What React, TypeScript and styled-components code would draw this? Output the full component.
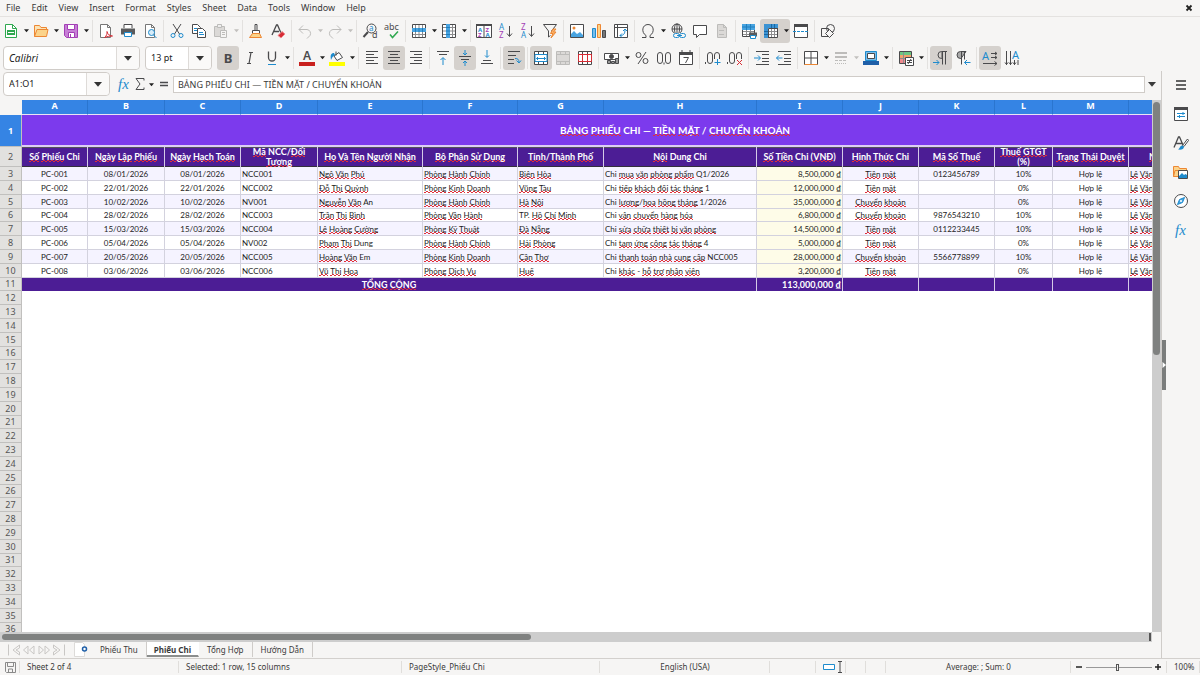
import React from "react";
import styled, { createGlobalStyle, css } from "styled-components";

const GlobalStyle = createGlobalStyle`
  * { box-sizing: border-box; }
  html, body, #root { height: 100%; }
  body {
    margin: 0;
    overflow: hidden;
    background: #f6f5f4;
    color: #3a3a3a;
    font-family: "Noto Sans", "Open Sans", sans-serif;
    font-size: 9px;
    line-height: 12px;
  }
  button, input, select { font: inherit; color: inherit; margin: 0; padding: 0; border: 0; background: none; }
  svg { display: block; flex: none; overflow: visible; }
`;

const INK = "#4a4a4c";
const BLUE = "#1e8bcd";
const ORANGE = "#ed8733";
const PURPLE = "#a33eb5";
const GREEN = "#2fa84f";
const RED = "#d62c35";
const PALE = "#bdbcba";

/* ---------- frame ---------- */

const Window = styled.div`
  display: flex;
  flex-direction: column;
  height: 100vh;
  min-height: 400px;
`;

const MenuBar = styled.nav`
  display: flex;
  align-items: center;
  height: 17px;
  padding: 0 6px 0 0;
  border-bottom: 1px solid #e4e2e0;
`;

const MenuItem = styled.button`
  padding: 0 5px 0 6px;
  height: 16px;
`;

const CloseDocument = styled.button`
  margin-left: auto;
  width: 10px;
  height: 16px;
  display: grid;
  place-items: center;
`;

const ToolRow = styled.div<{ $inset?: number; $height: number }>`
  display: flex;
  align-items: center;
  flex: none;
  height: ${(p) => p.$height}px;
  padding-left: ${(p) => p.$inset ?? 0}px;
`;

const Separator = styled.span`
  flex: none;
  width: 1px;
  height: 22px;
  margin: 0 2px;
  background: #e3e1df;
`;

const ToolButton = styled.button<{ $active?: boolean }>`
  flex: none;
  display: grid;
  place-items: center;
  width: 22px;
  height: 24px;
  border-radius: 3px;
  background: ${(p) => (p.$active ? "#d5d1cd" : "transparent")};
`;

const SplitTool = styled.span<{ $active?: boolean }>`
  display: flex;
  flex: none;
  border-radius: 3px;
  background: ${(p) => (p.$active ? "#d5d1cd" : "transparent")};
`;

const DropButton = styled.button<{ $faded?: boolean }>`
  display: grid;
  place-items: center;
  width: 8px;
  height: 24px;
  color: ${(p) => (p.$faded ? "#c2c0be" : "#222")};
`;

const Combo = styled.label<{ $width: number }>`
  position: relative;
  display: flex;
  flex: none;
  width: ${(p) => p.$width}px;
  height: 24px;
  margin-right: 5px;
  border: 1px solid #d0ccc8;
  border-radius: 4px;
  background: #fff;
`;

const ComboSelect = styled.select<{ $italic?: boolean }>`
  appearance: none;
  width: 100%;
  padding: 0 28px 0 5px;
  font-size: ${(p) => (p.$italic ? 10 : 9)}px;
  color: #222;
  font-style: ${(p) => (p.$italic ? "italic" : "normal")};
`;

const ComboInput = styled.input`
  flex: 1;
  min-width: 0;
  padding: 0 5px;
  color: #222;
`;

const ComboArrow = styled.span`
  position: absolute;
  top: 0;
  right: 0;
  bottom: 0;
  width: 23px;
  display: grid;
  place-items: center;
  color: #333;
  border-left: 1px solid #dedbd8;
  background: #faf9f8;
  border-radius: 0 4px 4px 0;
  pointer-events: none;
`;

const Workspace = styled.div`
  flex: 1;
  min-height: 0;
  display: flex;
`;

const Document = styled.main`
  flex: 1;
  min-width: 0;
  display: flex;
  flex-direction: column;
`;

const FormulaBar = styled.div`
  display: flex;
  align-items: center;
  flex: none;
  height: 29px;
  padding: 0 3px 3px;
`;

const FormulaInput = styled.input`
  flex: 1;
  min-width: 0;
  height: 17px;
  padding: 0 4px;
  border: 1px solid #d0ccc8;
  background: #fff;
`;

const FormulaTool = styled.button<{ $width: number }>`
  flex: none;
  display: grid;
  place-items: center;
  width: ${(p) => p.$width}px;
  height: 22px;
`;

const SheetRow = styled.div`
  flex: 1;
  min-height: 0;
  display: flex;
`;

const SheetView = styled.div`
  flex: 1;
  min-width: 0;
  overflow: hidden;
  background: linear-gradient(90deg, #e2e1df 22px, #fff 22px);
`;

const VerticalTrack = styled.div`
  flex: none;
  width: 9px;
  padding: 2px 1px;
  background: #cdcdcd;
`;

const VerticalThumb = styled.div`
  height: 48%;
  border-radius: 4px;
  background: #7f8180;
`;

const HorizontalTrack = styled.div`
  flex: none;
  display: flex;
  align-items: center;
  justify-content: space-between;
  height: 10px;
  margin-right: 9px;
  padding: 0 1px 0 2px;
  background: #cdcdcd;
`;

const HorizontalThumb = styled.div`
  width: 46%;
  height: 6px;
  border-radius: 4px;
  background: #7f8180;
`;

const SplitGrip = styled.span`
  width: 2px;
  height: 8px;
  background: #555;
`;

/* ---------- spreadsheet ---------- */

const Grid = styled.table`
  table-layout: fixed;
  width: 1328px;
  border-collapse: separate;
  border-spacing: 0;
  font-family: Lato, "Noto Sans", sans-serif;
  color: #1c1c1c;
  line-height: 12px;
  white-space: nowrap;

  th, td { padding: 0; overflow: hidden; }
`;

const ColumnHead = styled.th`
  height: 15px;
  border-right: 1px solid #2a75cf;
  border-bottom: 1px solid #e9e4f5;
  background: #3584e4;
  color: #fff;
  font: bold 9px/12px "Noto Sans", sans-serif;
  vertical-align: top;
`;

const Corner = styled.td`
  background: #f6f5f4;
`;

const RowHead = styled.th<{ $selected?: boolean }>`
  border: solid #c1c0be;
  border-width: 0 1px 1px 0;
  background: #e2e1df;
  color: #555;
  font: 9px/12px "Noto Sans", sans-serif;
  ${(p) =>
    p.$selected &&
    css`
      background: #3584e4;
      color: #fff;
      font-weight: bold;
    `}
`;

const TitleRow = styled.tr`
  height: 32px;
`;

const TitleCell = styled.td`
  background: #7c3aed;
  color: #fff;
  border-bottom: 2px solid #dccdf5;
  text-align: center;
  font-size: 10px;
  font-weight: bold;
`;

const HeadingRow = styled.tr`
  height: 20px;
`;

const Heading = styled.th`
  border: solid #d5cbe6;
  border-width: 0 1px 0 0;
  box-shadow: inset 0 1px 0 #55525c, inset 0 -1px 0 #33303c;
  background: #4c1d95;
  color: #fff;
  font-size: 9px;
  line-height: 10px;
`;

const HeadingText = styled.div`
  display: flex;
  flex-direction: column;
  justify-content: center;
  height: 19px;
`;

const BodyRow = styled.tr<{ $short?: boolean; $tint?: boolean }>`
  height: ${(p) => (p.$short ? 13 : 14)}px;
  background: ${(p) => (p.$tint ? "#f5f3ff" : "#fff")};
`;

const Cell = styled.td<{ $align?: string; $money?: boolean }>`
  && { padding: 0 1px; }
  border: solid #d3d2de;
  border-width: 0 1px 1px 0;
  font-size: 8px;
  text-align: ${(p) => p.$align ?? "left"};
  background: ${(p) => (p.$money ? "#fefce8" : "transparent")};
`;

const TotalCell = styled.td<{ $align?: string }>`
  && { padding: 0 1px; }
  border-right: 1px solid #d5cbe6;
  background: #4c1d95;
  color: #fff;
  font-size: 9px;
  font-weight: bold;
  text-align: ${(p) => p.$align ?? "center"};
`;

const BlankCell = styled.td`
  background: #fff;
`;

const Misspelt = styled.span`
  background:
    linear-gradient(90deg, #e0303a 50%, transparent 50%) 0 100% / 4px 1px repeat-x,
    linear-gradient(90deg, transparent 50%, #e0303a 50%) 0 calc(100% - 1px) / 4px 1px repeat-x;
`;

/* ---------- tabs, sidebar, status ---------- */

const TabStrip = styled.div`
  display: flex;
  flex: none;
  height: 16px;
  padding-left: 6px;
  font-size: 8px;
`;

const TabNav = styled.button`
  width: 15px;
  height: 15px;
  display: grid;
  place-items: center;
  color: #c9c7c5;
`;

const AddSheet = styled.button`
  display: grid;
  place-items: center;
  width: 14px;
  height: 15px;
  margin: 0 4px 0 8px;
`;

const SheetTab = styled.button<{ $active?: boolean }>`
  height: 15px;
  padding: 0 8px;
  border-right: 1px solid #cfccc9;
  ${(p) =>
    p.$active &&
    css`
      padding: 2px 7px 0;
      background: #fff;
      border-right-color: transparent;
      border-bottom: 2px solid #8b8d8c;
      font-weight: bold;
    `}
`;

const Sidebar = styled.aside`
  position: relative;
  flex: none;
  display: flex;
  flex-direction: column;
  align-items: center;
  gap: 5px;
  width: 39px;
  padding-top: 2px;
  border-left: 1px solid #cfccc9;
`;

const DeckButton = styled.button`
  display: grid;
  place-items: center;
  width: 24px;
  height: 24px;
`;

const DeckHandle = styled.button`
  position: absolute;
  left: 0;
  top: 50%;
  width: 4px;
  height: 50px;
  margin-top: -25px;
  && { background: #7b7d7c; }
  display: grid;
  place-items: center;
`;

const StatusBar = styled.footer`
  flex: none;
  display: grid;
  grid-template-columns: 20px 159fr 223fr 198fr 170fr 46px 30px 20px 20px 185fr 96px 33px;
  align-items: center;
  height: 17px;
  border-top: 1px solid #d3d0cd;
  font-size: 8px;
`;

const StatusField = styled.div<{ $center?: boolean }>`
  display: flex;
  align-items: center;
  justify-content: ${(p) => (p.$center ? "center" : "flex-start")};
  height: 12px;
  padding: 0 6px 0 7px;
  border-right: 1px solid #e0dedb;
  white-space: nowrap;
`;

const ZoomField = styled.div`
  display: flex;
  align-items: center;
  justify-content: center;
  gap: 2px;
  height: 12px;
  border-right: 1px solid #e0dedb;
`;

const ZoomStep = styled.button`
  width: 9px;
  height: 12px;
  display: grid;
  place-items: center;
`;

const ZoomSlider = styled.input`
  appearance: none;
  width: 66px;
  height: 12px;
  background: linear-gradient(#999, #999) center / 100% 1px no-repeat;
  &::-webkit-slider-thumb {
    appearance: none;
    width: 3px;
    height: 7px;
    border: 1px solid #555;
    background: #f6f5f4;
  }
`;

/* ---------- icons ---------- */

const Svg = ({ children, w = 16, h = 16 }: { children: React.ReactNode; w?: number; h?: number }) => (
  <svg width={w} height={h} viewBox={`0 0 ${w} ${h}`} fill="none" stroke={INK} strokeWidth="1" aria-hidden="true">
    {children}
  </svg>
);

const Arrow = ({ size = 5 }: { size?: number }) => (
  <svg width={size} height={size} viewBox="0 0 6 6" aria-hidden="true">
    <path d="M0 1.5h6L3 5z" fill="currentColor" />
  </svg>
);

const page = "M3.5 1.5h6l3 3v10h-9z";
const lines = (xs: [number, number][], ys: number[]) => xs.map(([a, b], i) => `M${a} ${ys[i]}.5H${b}`).join("");

const I: Record<string, React.ReactNode> = {
  newSheet: (
    <Svg><path d="M2.5 1.5h7l4 4v9h-11z" stroke={GREEN} fill="#fff" /><path d="M9.5 1.5v4h4" stroke={GREEN} /><path d="M4 7h8v5H4z" fill={GREEN} stroke="none" /><path d="M5 9.500h6" stroke="#fff" /></Svg>
  ),
  open: (
    <Svg><path d="M1.500 13.500v-11h5l1.500 2h5.500v3" fill="#fbe3b4" stroke={ORANGE} /><path d="M1.500 13.500 4 6.500h11l-1.500 7z" fill="#fbd38a" stroke={ORANGE} /></Svg>
  ),
  save: (
    <Svg><path d="M1.500 1.500h13v13h-11l-2-2z" fill="#c77fd6" stroke={PURPLE} /><path d="M4.500 1.500h7v5h-7z" fill="#fff" stroke={PURPLE} /><path d="M5.500 9.500h6v5h-6z" fill="#fff" stroke={PURPLE} /><path d="M7.500 11v3" stroke={PURPLE} /></Svg>
  ),
  pdf: (
    <Svg><path d="M2.500 1.500h7l3 3v10h-10z" fill="#fff" stroke="#777" /><path d="M9.500 1.500v3h3" stroke="#777" /><path d="M6.500 14.500c2-1.500 3-4 2.500-6 .5 3 3 4.500 5.500 4.500-3 0-5.500.5-8 1.500z" stroke={RED} /></Svg>
  ),
  print: (
    <Svg><path d="M4 5V1.500h8V5" fill="#fff" /><path d="M1 5.500h14v6H1z" fill="#5a5a5c" stroke="none" /><path d="M4.500 9.500h7v4h-7z" fill="#fff" stroke={BLUE} /></Svg>
  ),
  preview: (
    <Svg><path d={page} fill="#fff" stroke="#777" /><path d="M9.500 1.500v3h3" stroke="#777" /><circle cx="9.500" cy="9.500" r="3" fill="#d8ecf8" stroke={BLUE} /><path d="m11.500 12 3 3" stroke={BLUE} /></Svg>
  ),
  cut: (
    <Svg><path d="m4 1 6.500 10M12 1 5.500 11" /><circle cx="4" cy="12.500" r="2" stroke={BLUE} /><circle cx="12" cy="12.500" r="2" stroke={BLUE} /></Svg>
  ),
  copy: (
    <Svg><path d="M1.500 1.500h5l3 3v6h-8z" fill="#fff" /><path d="M6.500 5.500h5l3 3v6h-8z" fill="#fff" /><path d="M8 9.500h4M8 11.500h5M3 5.500h3M3 7.500h3" stroke={BLUE} /></Svg>
  ),
  paste: (
    <Svg><path d="M1.500 3.500h10v10h-10z" fill="#dbd9d7" stroke={PALE} /><path d="M4.500 1.500h4v3h-4z" fill="#eee" stroke={PALE} /><path d="M7.500 7.500h6v7h-6z" fill="#f6f5f4" stroke={PALE} /><path d="M9 9.500h3M9 11.500h3" stroke={PALE} /></Svg>
  ),
  brush: (
    <Svg><path d="M7 1.500h2v6H7z" /><path d="M4.500 7.500h7v3h-7z" fill="#fff" /><path d="M4.500 10.500h7l2 4h-12z" fill="#fbd38a" stroke={ORANGE} /></Svg>
  ),
  clear: (
    <Svg><path d="M2 12 6.500 2h1L11 10M4 8.500h5" strokeWidth="1.300" /><path d="m8 12.500 4-4 3 2.500-4 4z" fill={RED} stroke="#f08a8f" /></Svg>
  ),
  undo: (<Svg><path d="M2 6.500h8a4 4 0 0 1 3 6l-3 3M6 2.500l-4 4 4 4" stroke={PALE} /></Svg>),
  redo: (<Svg><path d="M14 6.500H6a4 4 0 0 0-3 6l3 3M10 2.500l4 4-4 4" stroke={PALE} /></Svg>),
  find: (
    <Svg><circle cx="9.500" cy="5.500" r="4.500" /><path d="M6 9 1.500 14" strokeWidth="2" /><text x="7" y="8" fontSize="8" fill={BLUE} stroke="none">a</text><text x="10" y="15" fontSize="9" fill={INK} stroke="none">d</text></Svg>
  ),
  spell: (
    <Svg><text x="0" y="7" fontSize="9" fill={INK} stroke="none">abc</text><path d="m6 11.500 2.500 3 5.500-6" stroke={GREEN} strokeWidth="1.500" /></Svg>
  ),
  rows: (
    <Svg><path d="M1.500 1.500h13v13h-13z" fill="#fff" /><path d="M4.500 2v12M8 2v12M11.500 2v12M2 11.500h12" stroke="#8c8c8e" /><path d="M1 5h14v4H1z" fill="#48a3e0" stroke="none" /><path d="M4.500 5v4M8 5v4M11.500 5v4" stroke="#1f7fbf" /></Svg>
  ),
  cols: (
    <Svg><path d="M1.500 1.500h13v13h-13z" fill="#fff" /><path d="M2 4.500h12M2 8h12M2 11.500h12M11.500 2v12" stroke="#8c8c8e" /><path d="M5 1h4v14H5z" fill="#48a3e0" stroke="none" /><path d="M5 4.500h4M5 8h4M5 11.500h4" stroke="#1f7fbf" /></Svg>
  ),
  sort: (
    <Svg><path d="M.5 1.500h15v13H.5zM8 3v11" fill="#fff" /><path d="M0 1h16v2H0z" fill={INK} stroke="none" /><g stroke="none" fontSize="6" fontWeight="bold"><text x="2" y="8.500" fill={BLUE}>A</text><text x="2" y="14" fill={PURPLE}>Z</text><text x="9.500" y="8.500" fill={PURPLE}>Z</text><text x="9.500" y="14" fill={BLUE}>A</text></g></Svg>
  ),
  sortAsc: (
    <Svg><g stroke="none" fontSize="8"><text x="1" y="7" fill={BLUE}>A</text><text x="1" y="15" fill={PURPLE}>Z</text></g><path d="M11.500 3v10M9 10.500l2.500 3 2.500-3" /></Svg>
  ),
  sortDesc: (
    <Svg><g stroke="none" fontSize="8"><text x="1" y="7" fill={PURPLE}>Z</text><text x="1" y="15" fill={BLUE}>A</text></g><path d="M11.500 3v10M9 10.500l2.500 3 2.500-3" /></Svg>
  ),
  filter: (
    <Svg><path d="M1.500 1.500h13L9.500 8v2M1.500 1.500l5 6.500v6l2-1.500" /><path d="m11 6-2.500 4.500H11L9 15l5-6h-2.500L14 6z" fill="#fbb46c" stroke={ORANGE} /></Svg>
  ),
  image: (
    <Svg><path d="M1.500 1.500h13v13h-13z" fill="#fff" /><path d="m2 14 0-3 3-3 3 3 3-2 3 3v2z" fill="#48a3e0" stroke="none" /><circle cx="5" cy="5" r="1.500" fill={ORANGE} stroke="none" /></Svg>
  ),
  chart: (
    <Svg><path d="M1.500 5.500h3v9h-3z" fill="#79bdea" stroke={BLUE} /><path d="M6.500 1.500h3v13h-3z" fill="#fbd38a" stroke={ORANGE} /><path d="M11.500 7.500h3v7h-3z" fill="#777" /></Svg>
  ),
  pivot: (
    <Svg><path d="M1.500 1.500h13v13h-13zM1.500 4.500h13M4.500 1.500v13" fill="#fff" /><path d="M7 12.500c4 0 5-2 5-6M10 8l2-2 2 2M9 10.500l-2 2 2 2" stroke={BLUE} /></Svg>
  ),
  omega: (<Svg><path d="M2 14.500h4v-2C1 9.500 2 1.500 8 1.500s7 8 2 11v2h4" /></Svg>),
  link: (
    <Svg><circle cx="7" cy="6" r="5" /><path d="M2 6h10M7 1v10" /><ellipse cx="7" cy="6" rx="2.500" ry="5" /><path d="M4 10h12v5H4z" fill="#f6f5f4" stroke="none" /><rect x="3.500" y="10.500" width="6" height="4" rx="2" stroke={BLUE} /><rect x="9.500" y="10.500" width="6" height="4" rx="2" stroke={BLUE} /><path d="M7 12.500h5" stroke={BLUE} /></Svg>
  ),
  comment: (<Svg><path d="M1.500 2.500h13v9h-7l-3 3v-3h-3z" fill="#fff" /></Svg>),
  pageBand: (<Svg><path d={page} fill="#dbd9d7" stroke={PALE} /><path d="M9.500 1.500v3h3M5 7.500h5M5 11.500h5" stroke={PALE} /></Svg>),
  printArea: (
    <Svg><path d="M1.500 1.500h12v12h-12z" fill="#fff" /><path d="M2 8.500h11M2 11.500h11M5.500 2v11M9.500 2v11" stroke="#8c8c8e" /><path d="M1 1h13v6H1z" fill="#48a3e0" stroke="none" /><path d="M1 4h13M5.500 1v6M9.500 1v6" stroke="#1f7fbf" /><path d="M8 9.500h8v4H8z" fill="#5a5a5c" stroke="none" /><path d="M9.500 12.500h5v3h-5z" fill="#fff" stroke={BLUE} /></Svg>
  ),
  freeze: (
    <Svg><path d="M1.500 1.500h13v13h-13z" fill="#fff" /><path d="M6 8.500h8M6 11.500h8M8.500 5v9M11.500 5v9" stroke="#8c8c8e" /><path d="M1 1h14v4H1zM1 1h4v14H1z" fill="#3b93d3" stroke="none" /><path d="M8.500 1v4M11.500 1v4M1 8.500h4M1 11.500h4" stroke="#1766a3" /><path d="M5.500 15V5.500H15" /></Svg>
  ),
  split: (
    <Svg><path d="M1.500 1.500h13v13h-13z" fill="#fff" /><path d="M1 1h14v3H1z" fill={INK} stroke="none" /><path d="M0 8.500h16" stroke={BLUE} strokeDasharray="3 1" /></Svg>
  ),
  shapes: (
    <Svg><path d="M1.500 5.500h7v8h-7z" /><circle cx="10.500" cy="5.500" r="4" /><path d="m9.500 6.500 4 4-4 4-4-4z" fill="#f6f5f4" /></Svg>
  ),
  bold: (<Svg><text x="8" y="13" textAnchor="middle" fontSize="13" fontWeight="bold" fill={INK} stroke="none">B</text></Svg>),
  italic: (<Svg><path d="M7 2.500h4M5 13.500h4M9 2.500l-2 11" strokeWidth="1.200" /></Svg>),
  underline: (<Svg><path d="M4.500 1.500v6a3.500 3.500 0 0 0 7 0v-6" strokeWidth="1.300" /><path d="M4 14.500h8" stroke={BLUE} /></Svg>),
  fontColor: (<Svg><text x="8" y="10" textAnchor="middle" fontSize="12" fontWeight="600" fill={INK} stroke="none">A</text><path d="M0 12h16v4H0z" fill="#c9211e" stroke="none" /></Svg>),
  highlight: (<Svg><path d="m5 6 5-3.500 3.500 5L8 10.500z" fill="#fff" /><path d="M7 1.500v4" /><path d="M5 3C2 3 1 5 2 10l1.500-3L6 5z" fill={BLUE} stroke="none" /><path d="M0 12h16v4H0z" fill="#ff0" stroke="none" /></Svg>),
  alignLeft: (<Svg><path d={lines([[2, 14], [2, 10], [2, 14], [2, 10], [2, 14]], [1, 4, 7, 10, 13])} /></Svg>),
  alignCenter: (<Svg><path d={lines([[2, 14], [4, 12], [2, 14], [4, 12], [2, 14]], [1, 4, 7, 10, 13])} /></Svg>),
  alignRight: (<Svg><path d={lines([[2, 14], [6, 14], [2, 14], [6, 14], [2, 14]], [1, 4, 7, 10, 13])} /></Svg>),
  alignTop: (<Svg><path d="M2 1.500h12M4 4.500h8" /><path d="M8 15V8M5.500 10 8 7.500l2.500 2.500" stroke={BLUE} /></Svg>),
  alignMiddle: (<Svg><path d="M2 6.500h12M4 9.500h8" /><path d="M8 0v4.500M6 3l2 2 2-2M8 16v-4.500M6 13l2-2 2 2" stroke={BLUE} /></Svg>),
  alignBottom: (<Svg><path d="M4 10.500h8M2 13.500h12" /><path d="M8 0v7M6 5.500l2 2 2-2" stroke={BLUE} /></Svg>),
  wrap: (<Svg><path d="M2 1.500h12M2 5.500h8M2 9.500h6M2 13.500h6" /><path d="M9 8.500c3 0 4 1 4 4M10.500 10.500l2.500 2.500 2-2.500" stroke={BLUE} /></Svg>),
  mergeCenter: (<Svg><path d="M1.500 1.500h13v13h-13zM1.500 4.500h13M1.500 11.500h13M5.500 1.500v3M10.500 1.500v3M5.500 11.500v3M10.500 11.500v3" fill="#fff" /><path d="M2 4.500h12v7H2z" fill="#fff" stroke={BLUE} /><path d="M3.500 8.500h9M5 7l-1.500 1.500L5 10M11 7l1.500 1.500L11 10" stroke={BLUE} /></Svg>),
  merge: (<Svg><path d="M1.500 1.500h13v13h-13zM1.500 4.500h13M1.500 11.500h13M5.500 1.500v3M10.500 1.500v3M5.500 11.500v3M10.500 11.500v3" fill="#dbd9d7" stroke={PALE} /></Svg>),
  unmerge: (<Svg><path d="M1.500 1.500h13v13h-13zM1.500 4.500h13M1.500 11.500h13M5.500 1.500v3M10.500 1.500v3M5.500 11.500v3M10.500 11.500v3" fill="#fff" /><path d="M1.500 4.500h13v7h-13zM5.500 4.500v7M10.500 4.500v7" stroke={RED} /></Svg>),
  currency: (<Svg><path d="M.5 3.500h14v6H.5z" fill="#fff" /><circle cx="7.500" cy="6.500" r="2" fill={INK} /><path d="M3.500 10.500h3v3h-3zM7.500 11.500h3v2h-3zM11.500 8.500h3v5h-3z" fill="#999" /></Svg>),
  percent: (<Svg><circle cx="4.500" cy="5" r="2.500" /><circle cx="11.500" cy="11" r="2.500" /><path d="M12 2 4 14" /></Svg>),
  number: (<Svg><rect x="1.500" y="2.500" width="5" height="11" rx="2.500" /><rect x="9.500" y="2.500" width="5" height="11" rx="2.500" /><path d="M8 12.500v2" /></Svg>),
  date: (<Svg><path d="M1.500 2.500h13v12h-13z" fill="#fff" /><path d="M1 2h14v3H1z" fill={INK} stroke="none" /><path d="M4 0v3M12 0v3M5.500 7.500h5l-3 5.500" /></Svg>),
  addDecimal: (<Svg><path d="M.5 12v2" /><rect x="2.500" y="2.500" width="5" height="11" rx="2.500" /><rect x="9.500" y="2.500" width="5" height="11" rx="2.500" /><path d="M9 9h7v7H9z" fill="#f6f5f4" stroke="none" /><path d="M12.500 9v6M9.500 12.500h6" stroke={BLUE} /></Svg>),
  removeDecimal: (<Svg><path d="M.5 12v2" /><rect x="2.500" y="2.500" width="5" height="11" rx="2.500" /><rect x="9.500" y="2.500" width="5" height="11" rx="2.500" /><path d="M9 9h7v7H9z" fill="#f6f5f4" stroke="none" /><path d="m10 10 5 5M15 10l-5 5" stroke={RED} /></Svg>),
  indent: (<Svg><path d="M2 1.500h13M8 4.500h7M8 8.500h7M8 11.500h7M2 14.500h13" /><path d="M0 8h6M4 5.500 6.500 8 4 10.500" stroke={BLUE} /></Svg>),
  outdent: (<Svg><path d="M2 1.500h13M8 4.500h7M8 8.500h7M8 11.500h7M2 14.500h13" /><path d="M6.500 8h-6M3 5.500.5 8 3 10.500" stroke={BLUE} /></Svg>),
  borders: (<Svg><path d="M1.500 1.500h13v13h-13z" fill="#fff" /><path d="M8 1.500v13M1.500 8h13" /><path d="M1.500 14.500h13" stroke={ORANGE} /></Svg>),
  borderStyle: (<Svg><path d="M2 2h12v2H2z" fill={PALE} stroke="none" /><path d="M2 7h12" stroke={PALE} strokeWidth="2" /><path d="M2 10.500h12" stroke={PALE} strokeDasharray="3 1" /><path d="M2 13.500h12" stroke={PALE} strokeDasharray="1 1" /></Svg>),
  borderColor: (<Svg><path d="M2.500 1.500h11v9h-11z" fill="#79bdea" stroke={BLUE} /><path d="M4.500 3.500h7v5h-7z" fill="#fff" /><path d="M0 11h16v4H0z" fill="#1f5fa8" stroke="none" /></Svg>),
  conditional: (<Svg><path d="M1.500 1.500h12v12h-12z" fill="#fff" /><path d="M2 2h11v3H2z" fill="#6cc784" stroke="none" /><path d="M2 5h11v3H2z" fill="#f4a06b" stroke="none" /><path d="M2 8h5v5H2z" fill="#f08a8f" stroke="none" /><path d="M5.500 2v11M2 8.500h6" stroke="#8c8c8e" /><path d="M7.500 7.500h8v8h-8z" fill="#fff" /><path d="M9 10.500h5M9 12.500h5M13 9l-3 5" /></Svg>),
  ltr: (<Svg><path d="M14 1.500H8.500a3.500 3.500 0 0 0 0 7H9V1.500M9.500 1.500v13M12.500 1.500v13" /><path d="M0 12.500h6M3.500 10 6 12.500 3.500 15" stroke={BLUE} /></Svg>),
  rtl: (<Svg><path d="M11 1.500H5.500a3.500 3.500 0 0 0 0 7H6z" fill="#aaa" /><path d="M6.500 1.500v13M9.500 1.500v8" /><path d="M15.500 12.500h-6M12 10l-2.500 2.500L12 15" stroke={BLUE} /></Svg>),
  textRight: (<Svg><text x="0" y="10" fontSize="11" fill={BLUE} stroke="none">A</text><path d="M9 3.500h6M9 7.500h6M1 13.500h14M13 2l2 1.500L13 5M13 6l2 1.500L13 9M12.500 11.500l2.500 2-2.500 2" /></Svg>),
  textDown: (<Svg><text x="8" y="9" fontSize="11" fill={BLUE} stroke="none">A</text><path d="M2.500 1v14M6.500 1v14M10.500 10v5M14 10v5M1 12.500l1.500 2 1.500-2M5 12.500l1.500 2 1.500-2M9 12.500l1.500 2 1.500-2" /></Svg>),
  fx: (<Svg><text x="2" y="13" fontSize="15" fontStyle="italic" fontFamily="Liberation Serif" fill={BLUE} stroke="none">fx</text></Svg>),
  sigma: (<Svg w={10} h={14}><path d="M9 3.500v-2H1l4 5.500-4 5.500h8v-2" /></Svg>),
  equals: (<Svg w={10} h={10}><path d="M1 3.500h8M1 6.500h8" strokeWidth="1.500" /></Svg>),
  hamburger: (<Svg w={12} h={12}><path d="M1 2h10M1 6h10M1 10h10" stroke="#333" strokeWidth="1.500" /></Svg>),
  properties: (<Svg><path d="M1.500 1.500h13v13h-13z" fill="#fff" /><path d="M1 1h14v3H1z" fill={INK} stroke="none" /><path d="M4 7.500h8M4 10.500h8M10 6v3M6.500 9v3" stroke={BLUE} /></Svg>),
  stylesDeck: (<Svg><path d="M1 12.500 5.500 2h1l3.500 8M3 8.500h6" strokeWidth="1.300" /><path d="m14.500 4-5 6.500 1.500 1 4.500-6z" fill="#fff" /><path d="M9 10.500c-2 0-2 3-4 4 3 .5 6 0 6-3z" fill={BLUE} stroke="none" /></Svg>),
  gallery: (<Svg><path d="M.5 12.500v-10h5l1 2h7v2" fill="#fbd38a" stroke={ORANGE} /><path d="M.5 12.500 2 6.500h4v6z" fill="#fbd38a" stroke={ORANGE} /><path d="M5.500 6.500h9v8h-9z" fill="#fff" /><path d="m6 14 0-2 3-3 2 2 1.500-1 1.500 1v3z" fill={BLUE} stroke="none" /></Svg>),
  navigator: (<Svg><circle cx="8" cy="8" r="6.500" fill="#fff" /><path d="m11.500 4.500-2 5-5 2 2-5z" fill="#48a3e0" stroke={BLUE} /><circle cx="8" cy="8" r="1" fill="#fff" stroke="none" /></Svg>),
  minus: (<Svg w={8} h={8}><path d="M1 4h6" stroke="#222" strokeWidth="1.500" /></Svg>),
  plus: (<Svg w={8} h={8}><path d="M1 4h6M4 1v6" stroke="#222" strokeWidth="1.500" /></Svg>),
  saved: (<Svg w={11} h={11}><path d="M.5.5h10v10h-9l-1-1zM2.500.5h6v4h-6zM3.500 7h4v3.500h-4z" stroke="#8a8a8a" /></Svg>),
  selection: (<Svg w={22} h={12}><path d="M.5 3.500h11v5H.5z" stroke={BLUE} fill="#fff" /><path d="M15 .5h4M15 11.500h4M17 .5v11" /></Svg>),
  first: (<Svg w={14} h={14}><path d="M1.500 1.500v11M12.500 2 6 7l6.500 5V9L9 7l3.500-2z" stroke="currentColor" /></Svg>),
  previous: (<Svg w={14} h={10}><path d="M6 1 1.500 5 6 9zM12 1 7.500 5 12 9z" stroke="currentColor" /></Svg>),
  next: (<Svg w={14} h={10}><path d="m2 1 4.500 4L2 9zM8 1l4.500 4L8 9z" stroke="currentColor" /></Svg>),
  last: (<Svg w={14} h={14}><path d="M12.500 1.500v11M1.500 2 8 7l-6.500 5V9L5 7 1.500 5z" stroke="currentColor" /></Svg>),
  addTab: (<Svg w={14} h={15}><path d="M.5.5h8l2 2v12H.5z" fill="#fff" stroke="#dddbd9" /><circle cx="10.500" cy="7" r="2" stroke="#1f5fa8" fill="#fff" strokeWidth="1.500" /></Svg>),
  close: (<Svg w={8} h={8}><path d="m1.500 1.500 5 5M6.500 1.500l-5 5" stroke="#222" strokeWidth="1.800" /></Svg>),
  collapse: (<Svg w={4} h={6}><path d="M.5 0v6L4 3z" fill="#fff" stroke="none" /></Svg>),
};

/* ---------- toolbars ---------- */

type Tool = { icon: string; label: string; drop?: boolean; active?: boolean; faded?: boolean };
const t = (icon: string, label: string, flags = ""): Tool => ({
  icon,
  label,
  drop: flags.includes("d"),
  active: flags.includes("a"),
  faded: flags.includes("f"),
});

const standardGroups: Tool[][] = [
  [t("newSheet", "New", "d"), t("open", "Open", "d"), t("save", "Save", "d")],
  [t("pdf", "Export as PDF"), t("print", "Print"), t("preview", "Print Preview")],
  [t("cut", "Cut"), t("copy", "Copy"), t("paste", "Paste", "df")],
  [t("brush", "Clone Formatting"), t("clear", "Clear Formatting")],
  [t("undo", "Undo", "df"), t("redo", "Redo", "df")],
  [t("find", "Find & Replace"), t("spell", "Spelling")],
  [t("rows", "Row", "d"), t("cols", "Column", "d")],
  [t("sort", "Sort"), t("sortAsc", "Sort Ascending"), t("sortDesc", "Sort Descending"), t("filter", "AutoFilter")],
  [t("image", "Insert Image"), t("chart", "Insert Chart"), t("pivot", "Insert Pivot Table")],
  [t("omega", "Special Character", "d"), t("link", "Hyperlink"), t("comment", "Comment"), t("pageBand", "Headers and Footers")],
  [t("printArea", "Define Print Area"), t("freeze", "Freeze Rows and Columns", "da"), t("split", "Split Window")],
  [t("shapes", "Show Draw Functions")],
];

const formatGroups: Tool[][] = [
  [t("bold", "Bold", "a"), t("italic", "Italic"), t("underline", "Underline", "d")],
  [t("fontColor", "Font Color", "d"), t("highlight", "Background Color", "d")],
  [t("alignLeft", "Align Left"), t("alignCenter", "Center Horizontally", "a"), t("alignRight", "Align Right")],
  [t("alignTop", "Align Top"), t("alignMiddle", "Center Vertically", "a"), t("alignBottom", "Align Bottom")],
  [t("wrap", "Wrap Text", "a")],
  [t("mergeCenter", "Merge and Center", "a"), t("merge", "Merge Cells"), t("unmerge", "Unmerge Cells")],
  [t("currency", "Currency", "d"), t("percent", "Percent"), t("number", "Number"), t("date", "Date")],
  [t("addDecimal", "Add Decimal Place"), t("removeDecimal", "Delete Decimal Place")],
  [t("indent", "Increase Indent"), t("outdent", "Decrease Indent")],
  [t("borders", "Borders", "d"), t("borderStyle", "Border Style", "df"), t("borderColor", "Border Color", "d")],
  [t("conditional", "Conditional", "d")],
  [t("ltr", "Left-To-Right", "a"), t("rtl", "Right-To-Left")],
  [t("textRight", "Text direction from left to right", "a"), t("textDown", "Text direction from top to bottom")],
];

const ToolGroups = ({ groups }: { groups: Tool[][] }) => (
  <>
    {groups.map((group, g) => (
      <React.Fragment key={g}>
        {g > 0 && <Separator />}
        {group.map((tool) =>
          tool.drop ? (
            <SplitTool key={tool.icon} $active={tool.active}>
              <ToolButton aria-label={tool.label}>{I[tool.icon]}</ToolButton>
              <DropButton $faded={tool.faded} aria-label={`${tool.label} options`}>
                <Arrow />
              </DropButton>
            </SplitTool>
          ) : (
            <ToolButton key={tool.icon} $active={tool.active} aria-label={tool.label}>
              {I[tool.icon]}
            </ToolButton>
          )
        )}
      </React.Fragment>
    ))}
  </>
);

/* ---------- sheet data ---------- */

const columns = [
  { letter: "A", width: 66, title: ["Số Phiếu Chi"] },
  { letter: "B", width: 77, title: ["Ngày Lập Phiếu"] },
  { letter: "C", width: 76, title: ["Ngày Hạch Toán"] },
  { letter: "D", width: 77, title: ["Mã NCC/Đối", "Tượng"] },
  { letter: "E", width: 105, title: ["Họ Và Tên Người Nhận"] },
  { letter: "F", width: 95, title: ["Bộ Phận Sử Dụng"] },
  { letter: "G", width: 86, title: ["Tỉnh/Thành Phố"] },
  { letter: "H", width: 153, title: ["Nội Dung Chi"] },
  { letter: "I", width: 86, title: ["Số Tiền Chi (VNĐ)"] },
  { letter: "J", width: 76, title: ["Hình Thức Chi"] },
  { letter: "K", width: 76, title: ["Mã Số Thuế"] },
  { letter: "L", width: 58, title: ["Thuế GTGT", "(%)"] },
  { letter: "M", width: 76, title: ["Trạng Thái Duyệt"] },
  { letter: "N", width: 93, title: ["Người Duyệt"] },
  { letter: "O", width: 106, title: ["Ghi Chú"] },
];

const alignment = ["center", "center", "center", "left", "left", "left", "left", "left", "right", "center", "center", "center", "center", "left", "left"];

const payments = [
  ["PC-001", "08/01/2026", "08/01/2026", "NCC001", "Ngô Văn Phú", "Phòng Hành Chính", "Biên Hòa", "Chi mua văn phòng phẩm Q1/2026", "8,500,000 ₫", "Tiền mặt", "0123456789", "10%"],
  ["PC-002", "22/01/2026", "22/01/2026", "NCC002", "Đỗ Thị Quỳnh", "Phòng Kinh Doanh", "Vũng Tàu", "Chi tiếp khách đối tác tháng 1", "12,000,000 ₫", "Tiền mặt", "", "0%"],
  ["PC-003", "10/02/2026", "10/02/2026", "NV001", "Nguyễn Văn An", "Phòng Hành Chính", "Hà Nội", "Chi lương/hoa hồng tháng 1/2026", "35,000,000 ₫", "Chuyển khoản", "", "0%"],
  ["PC-004", "28/02/2026", "28/02/2026", "NCC003", "Trần Thị Bình", "Phòng Vận Hành", "TP. Hồ Chí Minh", "Chi vận chuyển hàng hóa", "6,800,000 ₫", "Chuyển khoản", "9876543210", "10%"],
  ["PC-005", "15/03/2026", "15/03/2026", "NCC004", "Lê Hoàng Cường", "Phòng Kỹ Thuật", "Đà Nẵng", "Chi sửa chữa thiết bị văn phòng", "14,500,000 ₫", "Tiền mặt", "0112233445", "10%"],
  ["PC-006", "05/04/2026", "05/04/2026", "NV002", "Phạm Thị Dung", "Phòng Hành Chính", "Hải Phòng", "Chi tạm ứng công tác tháng 4", "5,000,000 ₫", "Tiền mặt", "", "0%"],
  ["PC-007", "20/05/2026", "20/05/2026", "NCC005", "Hoàng Văn Em", "Phòng Kinh Doanh", "Cần Thơ", "Chi thanh toán nhà cung cấp NCC005", "28,000,000 ₫", "Chuyển khoản", "5566778899", "10%"],
  ["PC-008", "03/06/2026", "03/06/2026", "NCC006", "Vũ Thị Hoa", "Phòng Dịch Vụ", "Huế", "Chi khác - hỗ trợ nhân viên", "3,200,000 ₫", "Tiền mặt", "", "0%"],
].map((row) => [...row, "Hợp lệ", "Lê Văn Cường", ""]);

const unknownWords = new Set(["mua", "Kinh", "Doanh", "Minh", "Hoa", "hoa", "thanh", "cung", "GTGT"]);
const acceptedWords = new Set(["Hợp", "lệ", "₫"]);
const isMisspelt = (word: string) =>
  !acceptedWords.has(word) && (unknownWords.has(word) || /[^\x00-\x7f—]/.test(word));

const Checked = ({ text }: { text: string }) => (
  <>
    {text.split(/([\s/()]+)/).map((part, i) => (isMisspelt(part) ? <Misspelt key={i}>{part}</Misspelt> : part))}
  </>
);

const emptyRows = Array.from({ length: 25 }, (_, i) => i + 12);
const isShort = (row: number) => row % 5 === 1;
const heading = "BẢNG PHIẾU CHI — TIỀN MẶT / CHUYỂN KHOẢN";

const Spreadsheet = () => (
  <Grid>
    <colgroup>
      <col style={{ width: 22 }} />
      {columns.map((c) => (
        <col key={c.letter} style={{ width: c.width }} />
      ))}
    </colgroup>
    <thead>
      <tr>
        <Corner />
        {columns.map((c) => (
          <ColumnHead key={c.letter} scope="col">{c.letter}</ColumnHead>
        ))}
      </tr>
    </thead>
    <tbody>
      <TitleRow>
        <RowHead $selected scope="row">1</RowHead>
        <TitleCell colSpan={15}><Checked text={heading} /></TitleCell>
      </TitleRow>
      <HeadingRow>
        <RowHead scope="row">2</RowHead>
        {columns.map((c) => (
          <Heading key={c.letter}>
            <HeadingText>
              {c.title.map((line) => (
                <div key={line}><Checked text={line} /></div>
              ))}
            </HeadingText>
          </Heading>
        ))}
      </HeadingRow>
      {payments.map((row, r) => (
        <BodyRow key={row[0]} $short={isShort(r + 3)} $tint={r % 2 === 0}>
          <RowHead scope="row">{r + 3}</RowHead>
          {row.map((value, c) => (
            <Cell key={c} $align={alignment[c]} $money={c === 8}><Checked text={value} /></Cell>
          ))}
        </BodyRow>
      ))}
      <BodyRow $short>
        <RowHead scope="row">11</RowHead>
        <TotalCell colSpan={8}><Checked text="TỔNG CỘNG" /></TotalCell>
        <TotalCell $align="right">113,000,000 ₫</TotalCell>
        {columns.slice(9).map((c) => (
          <TotalCell key={c.letter} />
        ))}
      </BodyRow>
      {emptyRows.map((n) => (
        <BodyRow key={n} $short={isShort(n)}>
          <RowHead scope="row">{n}</RowHead>
          <BlankCell colSpan={15} />
        </BodyRow>
      ))}
    </tbody>
  </Grid>
);

/* ---------- page ---------- */

const menus = ["File", "Edit", "View", "Insert", "Format", "Styles", "Sheet", "Data", "Tools", "Window", "Help"];
const decks: [string, string][] = [
  ["hamburger", "Sidebar Settings"],
  ["properties", "Properties"],
  ["stylesDeck", "Styles"],
  ["gallery", "Gallery"],
  ["navigator", "Navigator"],
  ["fx", "Functions"],
];
const sheets = ["Phiếu Thu", "Phiếu Chi", "Tổng Hợp", "Hướng Dẫn"];

export default function App() {
  return (
    <>
      <GlobalStyle />
      <Window>
        <MenuBar aria-label="Main menu">
          {menus.map((m) => (
            <MenuItem key={m}>{m}</MenuItem>
          ))}
          <CloseDocument aria-label="Close document">{I.close}</CloseDocument>
        </MenuBar>
        <ToolRow $height={27}>
          <ToolGroups groups={standardGroups} />
        </ToolRow>
        <ToolRow $height={27} $inset={3}>
          <Combo $width={137}>
            <ComboSelect $italic aria-label="Font name" defaultValue="Calibri">
              <option>Calibri</option>
            </ComboSelect>
            <ComboArrow><Arrow size={8} /></ComboArrow>
          </Combo>
          <Combo $width={67}>
            <ComboSelect aria-label="Font size" defaultValue="13 pt">
              <option>13 pt</option>
            </ComboSelect>
            <ComboArrow><Arrow size={8} /></ComboArrow>
          </Combo>
          <ToolGroups groups={formatGroups} />
        </ToolRow>
        <Workspace>
          <Document>
            <FormulaBar>
              <Combo $width={107}>
                <ComboInput aria-label="Name box" defaultValue="A1:O1" />
                <ComboArrow><Arrow size={8} /></ComboArrow>
              </Combo>
              <FormulaTool $width={18} aria-label="Function Wizard">{I.fx}</FormulaTool>
              <FormulaTool $width={14} aria-label="Select Function">{I.sigma}</FormulaTool>
              <DropButton aria-label="Select Function options"><Arrow /></DropButton>
              <FormulaTool $width={18} aria-label="Formula">{I.equals}</FormulaTool>
              <FormulaInput aria-label="Input line" defaultValue={heading} />
              <FormulaTool $width={13} aria-label="Expand formula bar"><Arrow size={8} /></FormulaTool>
            </FormulaBar>
            <SheetRow>
              <SheetView>
                <Spreadsheet />
              </SheetView>
              <VerticalTrack><VerticalThumb /></VerticalTrack>
            </SheetRow>
            <HorizontalTrack>
              <HorizontalThumb />
              <SplitGrip />
            </HorizontalTrack>
            <TabStrip>
              <TabNav aria-label="First sheet">{I.first}</TabNav>
              <TabNav aria-label="Previous sheet">{I.previous}</TabNav>
              <TabNav aria-label="Next sheet">{I.next}</TabNav>
              <TabNav aria-label="Last sheet">{I.last}</TabNav>
              <AddSheet aria-label="Add sheet">{I.addTab}</AddSheet>
              {sheets.map((s) => (
                <SheetTab key={s} $active={s === "Phiếu Chi"}>{s}</SheetTab>
              ))}
            </TabStrip>
          </Document>
          <Sidebar>
            {decks.map(([icon, label]) => (
              <DeckButton key={icon} aria-label={label}>{I[icon]}</DeckButton>
            ))}
            <DeckHandle aria-label="Hide sidebar">{I.collapse}</DeckHandle>
          </Sidebar>
        </Workspace>
        <StatusBar>
          <StatusField $center>{I.saved}</StatusField>
          <StatusField>Sheet 2 of 4</StatusField>
          <StatusField>Selected: 1 row, 15 columns</StatusField>
          <StatusField>PageStyle_Phiếu Chi</StatusField>
          <StatusField $center>English (USA)</StatusField>
          <StatusField />
          <StatusField>{I.selection}</StatusField>
          <StatusField />
          <StatusField />
          <StatusField $center>Average: ; Sum: 0</StatusField>
          <ZoomField>
            <ZoomStep aria-label="Zoom out">{I.minus}</ZoomStep>
            <ZoomSlider type="range" aria-label="Zoom" defaultValue={48} />
            <ZoomStep aria-label="Zoom in">{I.plus}</ZoomStep>
          </ZoomField>
          <StatusField>100%</StatusField>
        </StatusBar>
      </Window>
    </>
  );
}
